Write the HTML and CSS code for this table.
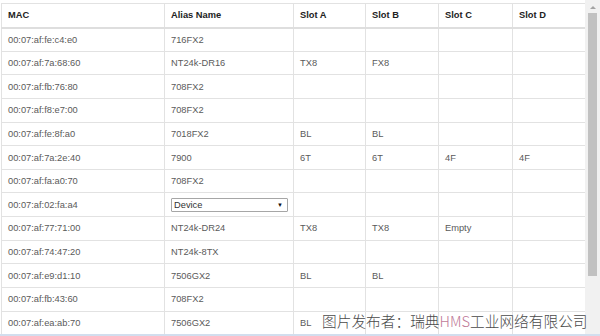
FILE: index.html
```html
<!DOCTYPE html>
<html>
<head>
<meta charset="utf-8">
<link rel="stylesheet" href="styles.css">
</head>
<body>
<div class="page">
  <div class="frame">
    <div class="table-wrap">
      <table class="grid">
        <colgroup>
          <col class="c-mac"><col class="c-alias"><col class="c-a"><col class="c-b"><col class="c-c"><col class="c-d">
        </colgroup>
        <thead>
          <tr class="head"><th>MAC</th><th>Alias Name</th><th>Slot A</th><th>Slot B</th><th>Slot C</th><th>Slot D</th></tr>
        </thead>
        <tbody>
          <tr><td>00:07:af:fe:c4:e0</td><td>716FX2</td><td></td><td></td><td></td><td></td></tr>
          <tr><td>00:07:af:7a:68:60</td><td>NT24k-DR16</td><td>TX8</td><td>FX8</td><td></td><td></td></tr>
          <tr><td>00:07:af:fb:76:80</td><td>708FX2</td><td></td><td></td><td></td><td></td></tr>
          <tr><td>00:07:af:f8:e7:00</td><td>708FX2</td><td></td><td></td><td></td><td></td></tr>
          <tr><td>00:07:af:fe:8f:a0</td><td>7018FX2</td><td>BL</td><td>BL</td><td></td><td></td></tr>
          <tr><td>00:07:af:7a:2e:40</td><td>7900</td><td>6T</td><td>6T</td><td>4F</td><td>4F</td></tr>
          <tr><td>00:07:af:fa:a0:70</td><td>708FX2</td><td></td><td></td><td></td><td></td></tr>
          <tr><td>00:07:af:02:fa:a4</td><td><div class="select"><span>Device</span><span class="caret">▼</span></div></td><td></td><td></td><td></td><td></td></tr>
          <tr><td>00:07:af:77:71:00</td><td>NT24k-DR24</td><td>TX8</td><td>TX8</td><td>Empty</td><td></td></tr>
          <tr><td>00:07:af:74:47:20</td><td>NT24k-8TX</td><td></td><td></td><td></td><td></td></tr>
          <tr><td>00:07:af:e9:d1:10</td><td>7506GX2</td><td>BL</td><td>BL</td><td></td><td></td></tr>
          <tr><td>00:07:af:fb:43:60</td><td>708FX2</td><td></td><td></td><td></td><td></td></tr>
          <tr><td>00:07:af:ea:ab:70</td><td>7506GX2</td><td>BL</td><td></td><td></td><td></td></tr>
        </tbody>
      </table>
    </div>
    <div class="scrollbar">
      <div class="arrow"></div>
      <div class="thumb"></div>
    </div>
  </div>
  <div class="bottom-line"></div>
  <div class="watermark">图片发布者：瑞典<span class="hms">HMS</span>工业网络有限公司</div>
</div>
</body>
</html>
```
FILE: styles.css
```css
html, body {
  margin: 0;
  padding: 0;
  background: #fff;
}
.page {
  position: relative;
  width: 600px;
  height: 336px;
  overflow: hidden;
  font-family: "Liberation Sans", Arial, sans-serif;
}
.frame {
  display: flex;
  height: 334px;
}
.table-wrap {
  width: 585px;
  height: 334px;
  overflow: hidden;
  padding: 3px 0 0 1px;
  box-sizing: border-box;
}
.grid {
  width: 584px;
  border-collapse: collapse;
  table-layout: fixed;
  font-size: 9.3px;
  color: #5a5a5a;
}
.c-mac { width: 163px; }
.c-alias { width: 129px; }
.c-a { width: 72px; }
.c-b { width: 73px; }
.c-c { width: 74px; }
.c-d { width: 73px; }
.grid th, .grid td {
  border: 1px solid #e2e2e2;
  padding: 0 6px;
  text-align: left;
  vertical-align: middle;
  white-space: nowrap;
  overflow: hidden;
}
.grid th {
  color: #222;
  font-weight: bold;
  border-bottom: 2px solid #dedede;
}
.head { height: 24px; }
.grid tbody tr { height: 23.65px; }
.select {
  display: flex;
  justify-content: space-between;
  align-items: center;
  width: 117px;
  height: 14px;
  box-sizing: border-box;
  border: 1px solid #a6a6a6;
  border-radius: 1px;
  padding: 0 4px 0 2px;
  color: #333;
  background: #fff;
}
.caret {
  font-size: 6px;
  color: #111;
}
.scrollbar {
  width: 15px;
  background: #f1f1f1;
  display: flex;
  flex-direction: column;
  align-items: center;
  padding-top: 6px;
  box-sizing: border-box;
}
.arrow {
  width: 0;
  height: 0;
  border-left: 3px solid transparent;
  border-right: 3px solid transparent;
  border-bottom: 3px solid #a3a3a3;
}
.thumb {
  margin-top: 4px;
  width: 9px;
  height: 263px;
  background: #c1c1c1;
}
.bottom-line {
  height: 2px;
  background: #d2deee;
}
.watermark {
  position: absolute;
  left: 322px;
  top: 311px;
  font-family: "Noto Sans CJK SC", "Noto Sans", sans-serif;
  font-size: 14.7px;
  font-weight: 300;
  color: #4a4a4a;
  white-space: nowrap;
  line-height: 20px;
}
.hms {
  color: #c07a98;
}
```
